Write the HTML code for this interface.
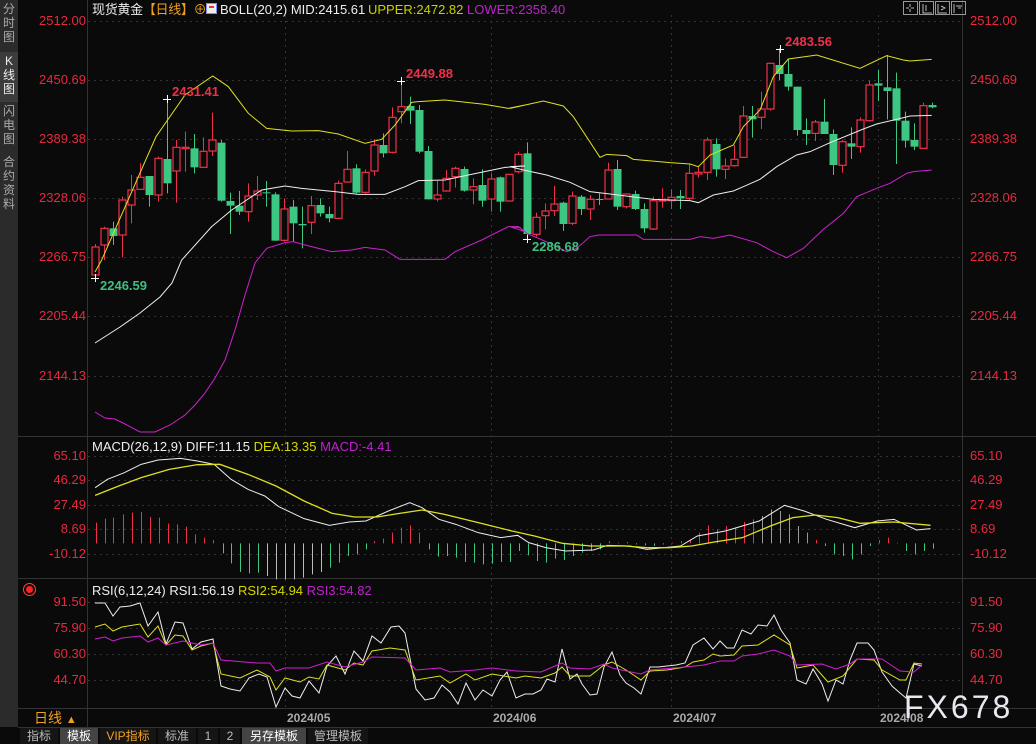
<!DOCTYPE html>
<html><head><meta charset="utf-8">
<style>
*{margin:0;padding:0;box-sizing:border-box}
body{width:1036px;height:744px;background:#0a0a0a;overflow:hidden;font-family:"Liberation Sans","Noto Sans CJK SC",sans-serif;position:relative;color:#ddd}
.t{position:absolute;white-space:nowrap;font-size:13px;line-height:14px}
.side{position:absolute;left:0;top:0;width:18px;height:727px;background:#2b2b2b}
.side div{position:absolute;left:0;width:18px;font-size:12px;line-height:14px;text-align:center;color:#aaa}
.ax{position:absolute;font-size:13px;color:#e8293f;line-height:14px}
.axl{right:950px;text-align:right}
.axr{left:970px}
.tab{position:absolute;top:728px;height:16px;font-size:12px;line-height:16px;text-align:center;color:#bbb;background:#151515}
svg{position:absolute;left:0;top:0}
</style></head><body>
<svg id="s" width="1036" height="744"></svg>
<div class="side">
<div style="top:2px;height:48px;">分<br>时<br>图</div>
<div style="top:52px;height:50px;background:#3c3c3c;color:#eee;padding-top:2px">K<br>线<br>图</div>
<div style="top:104px">闪<br>电<br>图</div>
<div style="top:155px">合<br>约<br>资<br>料</div>
</div>
<div class="t" style="left:92px;top:3px;color:#eee;letter-spacing:-0.3px">现货黄金<span style="color:#f0a020">【日线】</span><span style="color:#f0a020">⊕</span></div>
<div style="position:absolute;left:206px;top:3px;width:11px;height:11px;background:#eee;border:1px solid #88f"><div style="margin:2px;height:5px;border-top:2px solid #e33"></div></div>
<div class="t" style="left:220px;top:3px;color:#eee">BOLL(20,2) MID:2415.61</div>
<div class="t" style="left:368px;top:3px;color:#c8d000">UPPER:2472.82</div>
<div class="t" style="left:467px;top:3px;color:#c020d0">LOWER:2358.40</div>
<div class="t" style="left:92px;top:440px;color:#eee">MACD(26,12,9) DIFF:11.15 <span style="color:#d8d800">DEA:13.35</span> <span style="color:#c020d0">MACD:-4.41</span></div>
<div class="t" style="left:92px;top:584px;color:#eee">RSI(6,12,24) RSI1:56.19 <span style="color:#d8d800">RSI2:54.94</span> <span style="color:#c020d0">RSI3:54.82</span></div>
<div style="position:absolute;left:26px;top:586px;width:7px;height:7px;border-radius:50%;background:#f22;box-shadow:0 0 0 2px #0a0a0a,0 0 0 3px #f44"></div>
<div class="ax axl" style="top:14px">2512.00</div><div class="ax axr" style="top:14px">2512.00</div>
<div class="ax axl" style="top:73px">2450.69</div><div class="ax axr" style="top:73px">2450.69</div>
<div class="ax axl" style="top:132px">2389.38</div><div class="ax axr" style="top:132px">2389.38</div>
<div class="ax axl" style="top:191px">2328.06</div><div class="ax axr" style="top:191px">2328.06</div>
<div class="ax axl" style="top:250px">2266.75</div><div class="ax axr" style="top:250px">2266.75</div>
<div class="ax axl" style="top:309px">2205.44</div><div class="ax axr" style="top:309px">2205.44</div>
<div class="ax axl" style="top:369px">2144.13</div><div class="ax axr" style="top:369px">2144.13</div>
<div class="ax axl" style="top:449px">65.10</div><div class="ax axr" style="top:449px">65.10</div>
<div class="ax axl" style="top:473px">46.29</div><div class="ax axr" style="top:473px">46.29</div>
<div class="ax axl" style="top:498px">27.49</div><div class="ax axr" style="top:498px">27.49</div>
<div class="ax axl" style="top:522px">8.69</div><div class="ax axr" style="top:522px">8.69</div>
<div class="ax axl" style="top:547px">-10.12</div><div class="ax axr" style="top:547px">-10.12</div>
<div class="ax axl" style="top:595px">91.50</div><div class="ax axr" style="top:595px">91.50</div>
<div class="ax axl" style="top:621px">75.90</div><div class="ax axr" style="top:621px">75.90</div>
<div class="ax axl" style="top:647px">60.30</div><div class="ax axr" style="top:647px">60.30</div>
<div class="ax axl" style="top:673px">44.70</div><div class="ax axr" style="top:673px">44.70</div>
<div class="t" style="left:172px;top:85px;color:#f0304a;font-weight:bold">2431.41</div>
<div class="t" style="left:406px;top:67px;color:#f0304a;font-weight:bold">2449.88</div>
<div class="t" style="left:785px;top:35px;color:#f0304a;font-weight:bold">2483.56</div>
<div class="t" style="left:100px;top:279px;color:#3cc080;font-weight:bold">2246.59</div>
<div class="t" style="left:532px;top:240px;color:#3cc080;font-weight:bold">2286.68</div>
<div class="t" style="left:287px;top:711px;color:#aaa;font-weight:bold;font-size:12px">2024/05</div>
<div class="t" style="left:493px;top:711px;color:#aaa;font-weight:bold;font-size:12px">2024/06</div>
<div class="t" style="left:673px;top:711px;color:#aaa;font-weight:bold;font-size:12px">2024/07</div>
<div class="t" style="left:880px;top:711px;color:#aaa;font-weight:bold;font-size:12px">2024/08</div>
<div class="t" style="left:904px;top:690px;color:#e8e8f0;font-size:32px;line-height:34px;letter-spacing:3px">FX678</div>
<div class="t" style="left:34px;top:711px;color:#f0a020;font-size:14px">日线 <span style="font-size:11px">▲</span></div>
<div class="tab" style="left:20px;width:38px">指标</div>
<div class="tab" style="left:60px;width:38px;background:#444;color:#fff">模板</div>
<div class="tab" style="left:100px;width:56px;color:#f0a020">VIP指标</div>
<div class="tab" style="left:158px;width:38px">标准</div>
<div class="tab" style="left:198px;width:20px">1</div>
<div class="tab" style="left:220px;width:20px">2</div>
<div class="tab" style="left:242px;width:64px;background:#444;color:#fff">另存模板</div>
<div class="tab" style="left:308px;width:60px">管理模板</div>
<script>
const S=document.getElementById('s');let h='';
function L(x1,y1,x2,y2,c,w,d){h+=`<line x1="${x1}" y1="${y1}" x2="${x2}" y2="${y2}" stroke="${c}" stroke-width="${w||1}"${d?` stroke-dasharray="${d}"`:''}/>`;}
[21,80,139,198,257,316,376,456,480,505,529,554,602,628,654,680].forEach(y=>L(88,y+.5,962,y+.5,'#333',1,'2,4'));
[285,491,671,878].forEach(x=>L(x+.5,15,x+.5,708,'#333',1,'2,4'));
[436,578,708,727].forEach(y=>L(18,y+.5,1036,y+.5,'#333'));
L(87.5,0,87.5,727,'#333');L(962.5,0,962.5,708,'#333');
[903,919,935,951].forEach(x=>h+=`<rect x="${x+.5}" y="1.5" width="14" height="13" fill="none" stroke="#999"/>`);
h+=`<path d="M910 4v3M910 9v3M906 8h3M911 8h3M923 4v9h9M926 5v6M938 4v9h9M941 6l4 2-4 2M954 4v9M956 6h6M958 8l3 0" stroke="#bbb" fill="none"/>`;
const z4=[[1,'r',563,600,555,620],[2,'r',505,555,500,600],[3,'g',505,528,485,555],[4,'r',420,525,410,592],[5,'r',390,435,345,490],[6,'r',352,388,310,390],[7,'g',348,405,348,440],[8,'r',295,405,290,425],[9,'g',297,370,118,400],[10,'r',262,333,240,428],[11,'r',262,266,215,335],[12,'g',265,322,222,340],[13,'r',274,322,232,322],[14,'r',240,273,158,288],[15,'g',248,422,240,425],[16,'g',423,437,398,522],[17,'g',437,455,393,465],[18,'r',408,455,370,485],[19,'r',393,405,348,420],[20,'g',397,399,363,440],[21,'g',403,542,397,542],[22,'r',447,541,415,545],[23,'g',440,490,420,545],[24,'g',492,496,440,565],[25,'r',437,487,408,522],[26,'g',435,460,415,470],[27,'g',462,475,440,487],[28,'r',370,475,362,477],[29,'r',328,366,273,368],[30,'g',325,398,313,400],[31,'r',337,397,328,400],[32,'r',255,333,237,347],[33,'g',255,280,220,292],[34,'r',172,277,142,280],[35,'r',140,155,65,190],[36,'g',138,152,110,192],[37,'g',150,275,135,280],[38,'g',273,418,258,418],[39,'r',405,417,362,425],[40,'r',355,393,330,395],[41,'r',325,350,320,383],[42,'g',327,392,320,395],[43,'r',380,390,355,433],[44,'g',375,422,328,440],[45,'r',357,417,340,455],[46,'g',352,425,350,455],[47,'r',343,423,343,425]];
const z5=[[48,'r',373,425,365,430],[49,'g',370,612,337,625],[50,'r',562,613,548,620],[51,'r',543,557,520,598],[52,'r',522,542,468,558],[53,'g',518,582,515,603],[54,'r',498,580,485,585],[55,'g',500,537,495,555],[56,'r',508,537,495,570],[57,'g',507,510,490,525],[58,'r',420,507,398,507],[59,'g',417,530,390,540],[60,'r',492,530,490,535],[61,'g',492,537,482,540],[62,'g',537,595,520,608],[63,'r',512,597,500,600],[64,'r',510,512,475,533],[65,'r',502,512,478,537],[66,'g',498,505,480,537],[67,'r',430,505,402,510],[68,'r',427,432,410,443],[69,'r',330,427,322,450],[70,'g',342,418,325,440],[71,'r',408,418,385,447],[72,'r',388,407,345,410],[73,'r',258,382,228,384],[74,'g',258,268,228,323],[75,'r',237,262,185,297],[76,'r',100,237,98,242],[77,'g',105,132,55,150],[78,'g',132,170,88,182],[79,'g',170,300,170,317],[80,'g',300,312,265,345],[81,'r',276,310,270,333],[82,'g',275,312,207,312],[83,'g',312,405,298,435],[84,'r',335,406,330,428],[85,'g',340,350,292,387],[86,'r',270,350,262,368],[87,'r',165,272,152,275],[88,'g',160,167,120,213],[89,'g',172,183,75,268],[90,'g',175,272,128,402],[91,'g',272,332,245,353],[92,'g',330,350,280,360],[93,'r',227,355,218,355],[94,'g',225,232,218,235]];
const C=[];
z4.forEach(a=>C.push([a[1],60+a[2]/3,60+a[3]/3,60+a[4]/3,60+a[5]/3]));
z5.forEach(a=>C.push([a[1],30+a[2]/3,30+a[3]/3,30+a[4]/3,30+a[5]/3]));
C[0]=['r',247,275,244,277];
const R='#f0304a',G='#3cc882';
C.forEach((c,i)=>{const x=95+9*i;const col=c[0]=='r'?R:G;
L(x+.5,c[3],x+.5,c[4],col);
const bh=Math.max(1,c[2]-c[1]);
if(c[0]=='r')h+=`<rect x="${x-3}" y="${c[1]}" width="7" height="${bh}" fill="#0a0a0a" stroke="${col}" stroke-width="1.2"/>`;
else h+=`<rect x="${x-3.5}" y="${c[1]}" width="8" height="${bh}" fill="${col}"/>`;});
function P(pts,c,w){h+=`<polyline fill="none" stroke="${c}" stroke-width="${w||1}" points="${pts.map(p=>p.join(',')).join(' ')}"/>`;}
function zz(arr,ox,oy,sx,sy){sx=sx||3;sy=sy||3;return arr.map(p=>[ox+p[0]/sx,oy+p[1]/sy]);}
P([[95,272]].concat(zz([[50,600],[213,230],[300,105],[383,48],[430,80],[490,160],[545,205],[620,213],[700,212],[760,222],[840,250],[890,238],[930,195],[980,127],[1000,125],[1080,120],[1200,133],[1270,145],[1320,135]],85,60),zz([[0,235],[100,213],[160,228],[190,260],[270,382],[290,373],[350,377],[370,388],[480,398],[540,402],[565,410],[600,375],[670,345],[700,290],[750,240],[790,140],[835,87],[900,78],[920,75],[1050,115],[1130,77],[1180,90],[1200,93],[1265,88]],510,30)),'#e0e020');
P([[95,343],[120,327],[140,313],[160,297],[172,283]].concat(zz([[290,600],[380,500],[440,450],[530,390],[600,378],[650,385],[750,395],[820,403],[900,403],[960,380],[1000,362],[1080,360],[1150,345],[1260,322],[1320,318]],85,60),zz([[0,410],[40,420],[110,435],[180,457],[240,485],[300,492],[430,508],[540,512],[565,518],[610,495],[670,483],[700,470],[750,448],[800,410],[860,375],[900,365],[960,338],[1060,297],[1100,282],[1160,268],[1200,258],[1265,256]],510,30)),'#eee');
P([[95,412],[105,418],[115,419],[125,424],[140,432],[155,432],[170,425],[185,415],[195,405],[205,393],[215,378],[225,360],[235,330],[245,295],[255,263]].concat(zz([[545,565],[600,548],[625,545],[660,555],[740,575],[800,570],[840,562],[900,570],[945,598],[1080,598],[1110,575],[1190,540],[1270,500],[1300,500],[1320,515]],85,60),zz([[0,590],[30,593],[50,610],[120,640],[170,665],[200,655],[240,620],[265,615],[380,615],[400,628],[540,628],[570,620],[610,625],[660,615],[740,638],[790,665],[830,683],[880,655],[940,598],[1000,550],[1040,500],[1100,475],[1140,460],[1190,430],[1210,425],[1265,420]],510,30)),'#d020d0');
[[95,278],[167,99],[401,81],[780,49],[527,239]].forEach(m=>{L(m[0]-4,m[1]+.5,m[0]+4,m[1]+.5,'#fff');L(m[0]+.5,m[1]-4,m[0]+.5,m[1]+4,'#fff');});
const zy=436+322/3;
const hz=[[20,260],[35,248],[50,245],[67,235],[83,230],[100,228],[116,243],[132,245],[148,263],[164,265],[180,272],[196,295],[212,305],[228,312],[245,352],[260,382],[276,408],[292,412],[308,410],[324,420],[340,430],[356,430],[372,430],[388,425],[404,415],[420,408],[436,395],[452,380],[468,360],[484,355],[500,340],[515,315],[531,308],[547,290],[563,275],[579,268],[595,290],[612,340],[628,362],[644,360],[660,365],[676,378],[692,380],[708,385],[724,383],[740,378],[756,378],[772,345],[788,358],[804,375],[820,380],[836,368],[852,372],[868,360],[884,350],[900,345],[916,340],[932,315],[948,320],[964,318],[980,325],[996,328],[1012,330],[1028,325],[1044,320],[1060,315],[1077,312],[1093,290],[1109,268],[1125,280],[1141,270],[1157,275],[1173,258],[1189,250],[1205,240],[1221,220],[1237,225],[1253,235],[1269,270],[1285,290],[1301,312],[1317,330],[1333,355],[1349,360],[1365,370],[1381,355],[1397,330],[1413,312],[1429,305],[1445,320],[1461,345],[1477,355],[1493,345],[1509,338]];
hz.forEach(b=>{const x=Math.round(85+b[0]/1.78)+.5,y=436+b[1]/3;const up=y<zy;let col=up?R:G;if(b[0]>=324&&b[0]<=420)col='#bbb';if(b[0]>=1205&&b[0]<=1285)col='#999';L(x,zy,x,y,col);});
P(zz([[18,155],[40,130],[70,110],[100,85],[130,72],[170,67],[200,75],[230,85],[260,130],[290,160],[320,180],[345,212],[390,248],[435,268],[470,258],[500,255],[540,225],[578,200],[600,215],[630,250],[660,265],[700,290],[740,305],[770,298],[790,320],[820,335],[855,345],[905,342],[930,328],[970,330],[1000,340],[1060,330],[1090,300],[1140,285],[1200,255],[1245,208],[1280,225],[1320,250],[1370,275],[1410,255],[1440,250],[1480,282],[1505,278]],85,436,1.78,3),'#eee');
P(zz([[18,178],[60,150],[100,125],[150,100],[200,86],[240,85],[290,115],[340,150],[390,195],[440,232],[480,243],[520,243],[560,232],[600,222],[640,235],[700,260],[760,285],[800,300],[850,322],[900,330],[960,330],[1000,335],[1040,335],[1080,330],[1120,318],[1170,305],[1220,270],[1260,245],[1300,237],[1340,245],[1380,262],[1440,258],[1505,268]],85,436,1.78,3),'#e0e020',1.3);
P([[95,603],[105,603],[113,616],[120,607],[130,606],[140,603],[148,626],[158,612],[166,644],[175,622],[183,623],[192,649],[201,642],[213,639],[221,686],[230,689],[240,691],[249,678],[259,674],[267,677],[276,707],[285,688],[292,696],[300,698],[309,681],[319,693],[327,666],[336,656],[345,674],[354,651],[363,661],[372,636],[381,643],[391,627],[399,626],[405,633],[416,689],[425,700],[434,698],[442,685],[450,692],[458,704],[466,683],[475,700],[483,690],[492,696],[500,680],[507,672],[516,698],[525,694],[533,694],[541,690],[547,679],[555,682],[562,649],[570,679],[577,674],[582,684],[590,695],[597,694],[604,667],[612,652],[620,675],[626,683],[634,688],[641,694],[650,667],[658,667],[667,666],[676,665],[685,663],[693,645],[704,638],[713,649],[720,641],[727,648],[734,648],[742,630],[751,634],[758,625],[767,626],[774,615],[781,630],[790,643],[797,680],[806,684],[813,669],[822,684],[828,701],[836,680],[843,684],[850,660],[857,643],[868,643],[874,650],[882,672],[892,686],[900,693],[906,698],[914,664],[922,666]],'#eee');
P([[95,627],[105,624],[113,631],[122,627],[140,624],[148,637],[158,626],[166,645],[175,635],[183,636],[192,650],[201,646],[213,643],[221,674],[240,678],[257,670],[270,677],[276,690],[285,678],[300,682],[309,677],[319,679],[327,665],[345,670],[354,663],[363,665],[372,651],[390,648],[405,650],[416,680],[440,676],[450,683],[466,674],[475,680],[492,674],[516,678],[525,676],[541,678],[555,673],[562,667],[570,676],[590,676],[604,665],[612,662],[626,670],[641,680],[650,671],[667,670],[685,667],[693,662],[704,660],[713,654],[720,656],[734,655],[742,646],[758,645],[774,635],[790,645],[797,668],[813,665],[828,682],[843,676],[857,659],[874,660],[882,670],[900,680],[906,680],[914,663],[922,664]],'#e0e020');
P([[95,639],[105,637],[113,641],[122,638],[140,636],[148,642],[158,638],[166,645],[183,641],[201,645],[213,643],[221,660],[257,663],[270,663],[276,671],[285,668],[309,668],[327,662],[345,667],[363,662],[372,657],[405,658],[416,670],[440,668],[450,672],[475,670],[492,668],[516,671],[541,672],[562,663],[570,668],[590,669],[604,664],[612,668],[641,674],[650,670],[685,667],[704,665],[720,661],[734,661],[742,656],[758,654],[774,650],[790,656],[797,665],[822,664],[836,669],[850,664],[857,659],[882,659],[900,671],[914,672],[922,665]],'#d020d0');
S.innerHTML=h;
</script>
</body></html>
